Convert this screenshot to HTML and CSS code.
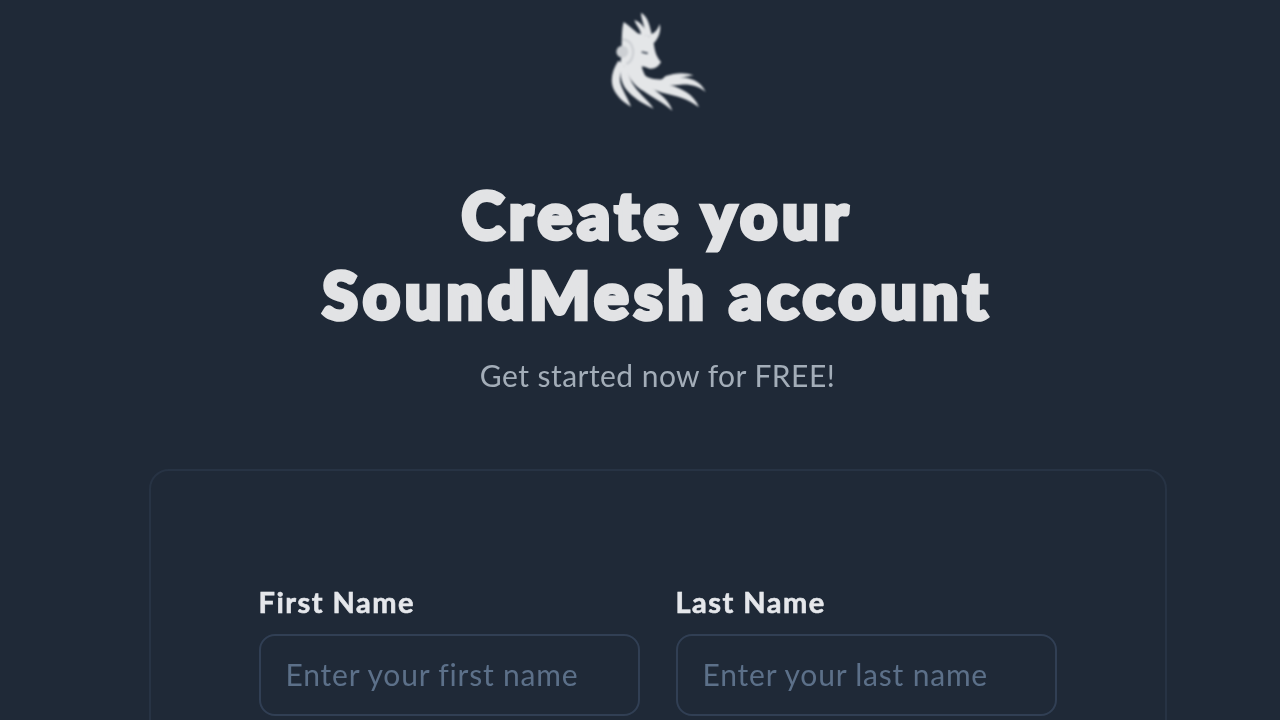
FILE: index.html
```html
<!DOCTYPE html>
<html lang="en">
<head>
<meta charset="utf-8">
<title>Create your SoundMesh account</title>
<link rel="stylesheet" href="styles.css">
</head>
<body>
<main class="page">
  <svg class="logo" viewBox="0 0 390 360" aria-label="SoundMesh logo">
    <g fill="#e4e6e8">
      <!-- head and ear -->
      <path d="M98 66 C112 74 128 90 140 100 L186 112 C190 146 192 166 210 186 C204 198 192 208 176 206 C166 204 160 198 152 200 C156 216 166 232 172 246 C140 232 118 212 88 190 C96 160 88 100 98 66 Z"/>
      <!-- antlers -->
      <path d="M150 38 C172 50 176 78 184 110 L160 106 C166 82 150 62 150 38 Z"/>
      <path d="M130 60 C150 66 164 86 172 108 L150 104 C150 90 136 78 130 60 Z"/>
      <path d="M206 72 C212 92 202 116 188 130 L174 106 C190 100 200 90 206 72 Z"/>
      <!-- tail strands -->
      <path d="M82 182 C64 210 56 240 68 268 C80 292 98 308 120 320 C112 296 96 276 88 248 C84 226 90 206 100 194 Z"/>
      <path d="M90 196 C84 226 92 258 116 280 C134 298 160 314 188 326 C172 302 150 286 132 262 C118 242 110 222 108 200 Z"/>
      <path d="M104 200 C110 232 130 258 158 274 C184 292 216 308 244 332 C234 300 210 284 186 266 C160 248 140 230 126 206 Z"/>
      <path d="M128 218 C148 250 180 268 214 278 C256 288 292 296 324 322 C308 282 272 266 238 256 C204 248 178 240 156 222 Z"/>
      <path d="M160 238 C196 260 232 258 270 254 C298 252 322 258 344 276 C328 242 296 232 264 232 C232 236 202 244 170 232 Z"/>
      <path d="M208 242 C244 238 276 232 308 226 C282 216 252 218 224 228 Z"/>
    </g>
    <circle cx="94" cy="155" r="18" fill="#cdd0d4"/>
    <path d="M94 118 C132 118 138 178 106 192" fill="none" stroke="#cdd0d4" stroke-width="7"/>
    <path d="M152 156 L170 160" stroke="#3a4453" stroke-width="5"/>
  </svg>
  <h1 class="title">Create your<br>SoundMesh account</h1>
  <p class="subtitle">Get started now for FREE!</p>
  <section class="card">
    <form class="row">
      <div class="field">
        <label class="label" for="first">First Name</label>
        <input class="input" id="first" type="text" placeholder="Enter your first name">
      </div>
      <div class="field">
        <label class="label" for="last">Last Name</label>
        <input class="input" id="last" type="text" placeholder="Enter your last name">
      </div>
    </form>
  </section>
</main>
</body>
</html>
```

FILE: styles.css
```css
* { box-sizing: border-box; }
html, body { margin: 0; height: 720px; overflow: hidden; }
body { background: #1f2937; font-family: Lato, "Liberation Sans", sans-serif; color: #e2e3e5; }
.page { display: flex; flex-direction: column; align-items: center; padding: 0 0 0 35px; }
.logo { display: block; width: 130px; height: 120px; margin-left: -3px; filter: blur(0.8px); flex: none; }
.title { margin: 55px 0 0; font-size: 64px; line-height: 80px; font-weight: 900; letter-spacing: 5.2px; -webkit-text-stroke: 4.5px #e2e3e5; text-align: center; color: #e2e3e5; filter: blur(0.4px); }
.subtitle { margin: 18px 0 0; font-size: 30px; line-height: 44px; letter-spacing: 0.45px; color: #a3adb8; filter: blur(0.4px); }
.card { width: 1018px; margin-top: 72px; padding: 111px 108px; border: 2px solid #273344; border-radius: 20px; flex: none; }
.row { display: flex; gap: 36px; }
.field { width: 381px; display: flex; flex-direction: column; }
.label { font-size: 29px; line-height: 40px; font-weight: 700; letter-spacing: 1.5px; -webkit-text-stroke: 0.6px #e5e7eb; color: #e5e7eb; margin-bottom: 12px; filter: blur(0.4px); }
.input { width: 381px; height: 82px; padding: 0 25px 2px; background: transparent; border: 2px solid #313f54; border-radius: 16px; font: 400 30px Lato, "Liberation Sans", sans-serif; letter-spacing: 0.8px; color: #e5e7eb; outline: none; filter: blur(0.4px); }
.input::placeholder { color: #5c7089; opacity: 1; }
```
